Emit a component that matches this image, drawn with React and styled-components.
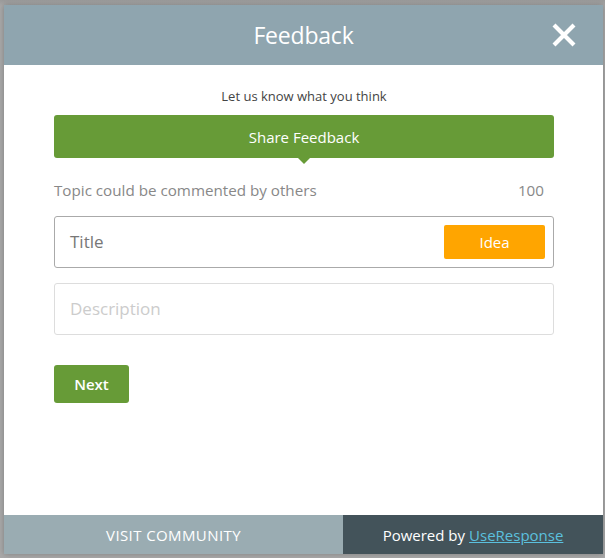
import React from "react";
import styled, { createGlobalStyle } from "styled-components";

const Global = createGlobalStyle`
  html, body { margin: 0; padding: 0; }
  body {
    background: #a9a9a9;
    font-family: "Segoe UI", "Open Sans", "Liberation Sans", sans-serif;
  }
`;

const Backdrop = styled.div`
  width: 605px;
  height: 558px;
  box-sizing: border-box;
  padding: 5px 2px 4px 4px;
  background: linear-gradient(#9a9a9a, #a9a9a9 6px);
`;

const Modal = styled.div`
  width: 599px;
  height: 549px;
  background: #fff;
  display: flex;
  flex-direction: column;
  box-shadow: 0 0 6px rgba(0, 0, 0, 0.25);
`;

const Header = styled.div`
  position: relative;
  height: 60px;
  background: #8fa5af;
  display: flex;
  align-items: center;
  justify-content: center;
`;

const Title = styled.h1`
  margin: 0;
  font-size: 23px;
  font-weight: 400;
  color: #fff;
  letter-spacing: -0.2px;
`;

const Close = styled.button`
  position: absolute;
  right: 27px;
  top: 18px;
  width: 24px;
  height: 24px;
  padding: 0;
  border: 0;
  background: none;
  display: flex;
`;

const Body = styled.div`
  flex: 1;
  padding: 22px 49px 0 50px;
  display: flex;
  flex-direction: column;
`;

const Lead = styled.p`
  margin: 0;
  text-align: center;
  font-size: 13px;
  line-height: 18px;
  color: #444;
`;

const GreenButton = styled.button`
  position: relative;
  margin-top: 10px;
  border: 0;
  border-radius: 3px;
  background: #679b37;
  color: #fff;
  font-family: inherit;
  font-size: 15px;
  height: ${(p) => p.$h}px;
  width: ${(p) => (p.$w ? `${p.$w}px` : "100%")};
  font-weight: ${(p) => p.$weight || 400};
  padding: 0;
  &::after {
    content: "";
    display: ${(p) => (p.$arrow ? "block" : "none")};
    position: absolute;
    left: 50%;
    bottom: -6px;
    margin-left: -6px;
    border-left: 6px solid transparent;
    border-right: 6px solid transparent;
    border-top: 6px solid #679b37;
  }
`;

const InfoRow = styled.div`
  margin-top: 22px;
  display: flex;
  justify-content: space-between;
  padding-right: 10px;
  font-size: 15.2px;
  line-height: 20px;
  color: #888;
`;

const Field = styled.div`
  margin-top: ${(p) => p.$mt}px;
  height: 52px;
  box-sizing: border-box;
  border: 1px solid ${(p) => p.$border};
  border-radius: 3px;
  display: flex;
  align-items: center;
  padding: 0 8px 0 15px;
`;

const Placeholder = styled.span`
  flex: 1;
  font-size: 17px;
  line-height: 22px;
  margin-top: ${(p) => p.$nudge || 0}px;
  color: ${(p) => p.$color};
`;

const IdeaButton = styled.button`
  width: 101px;
  height: 34px;
  border: 0;
  border-radius: 2px;
  background: #ffa500;
  color: #fff;
  font-family: inherit;
  font-size: 15px;
  padding: 0;
`;

const Actions = styled.div`
  margin-top: 20px;
  display: flex;
`;

const Footer = styled.div`
  height: 39px;
  display: flex;
  font-size: 15px;
  color: #fff;
`;

const FooterCell = styled.div`
  width: ${(p) => p.$w}px;
  background: ${(p) => p.$bg};
  display: flex;
  align-items: center;
  justify-content: center;
  letter-spacing: ${(p) => p.$ls || 0}px;
`;

const Link = styled.a`
  color: #5bc0de;
  text-decoration: underline;
  margin-left: 4px;
`;

export default function App() {
  return (
    <>
      <Global />
      <Backdrop>
        <Modal>
          <Header>
            <Title>Feedback</Title>
            <Close aria-label="Close">
              <svg width="24" height="24" viewBox="0 0 24 24">
                <path
                  d="M2 2 L22 22 M22 2 L2 22"
                  stroke="#fff"
                  strokeWidth="4.2"
                  strokeLinecap="butt"
                />
              </svg>
            </Close>
          </Header>
          <Body>
            <Lead>Let us know what you think</Lead>
            <GreenButton $h={43} $arrow>Share Feedback</GreenButton>
            <InfoRow>
              <span>Topic could be commented by others</span>
              <span>100</span>
            </InfoRow>
            <Field $mt={16} $border="#aaa">
              <Placeholder $color="#777">Title</Placeholder>
              <IdeaButton>Idea</IdeaButton>
            </Field>
            <Field $mt={15} $border="#ddd">
              <Placeholder $color="#ccc" $nudge={-1}>Description</Placeholder>
            </Field>
            <Actions>
              <GreenButton $h={38} $w={75} $weight={600}>Next</GreenButton>
            </Actions>
          </Body>
          <Footer>
            <FooterCell $w={339} $bg="#9aacb2" $ls={0.4}>VISIT COMMUNITY</FooterCell>
            <FooterCell $w={260} $bg="#43535a">
              Powered by<Link href="#">UseResponse</Link>
            </FooterCell>
          </Footer>
        </Modal>
      </Backdrop>
    </>
  );
}
